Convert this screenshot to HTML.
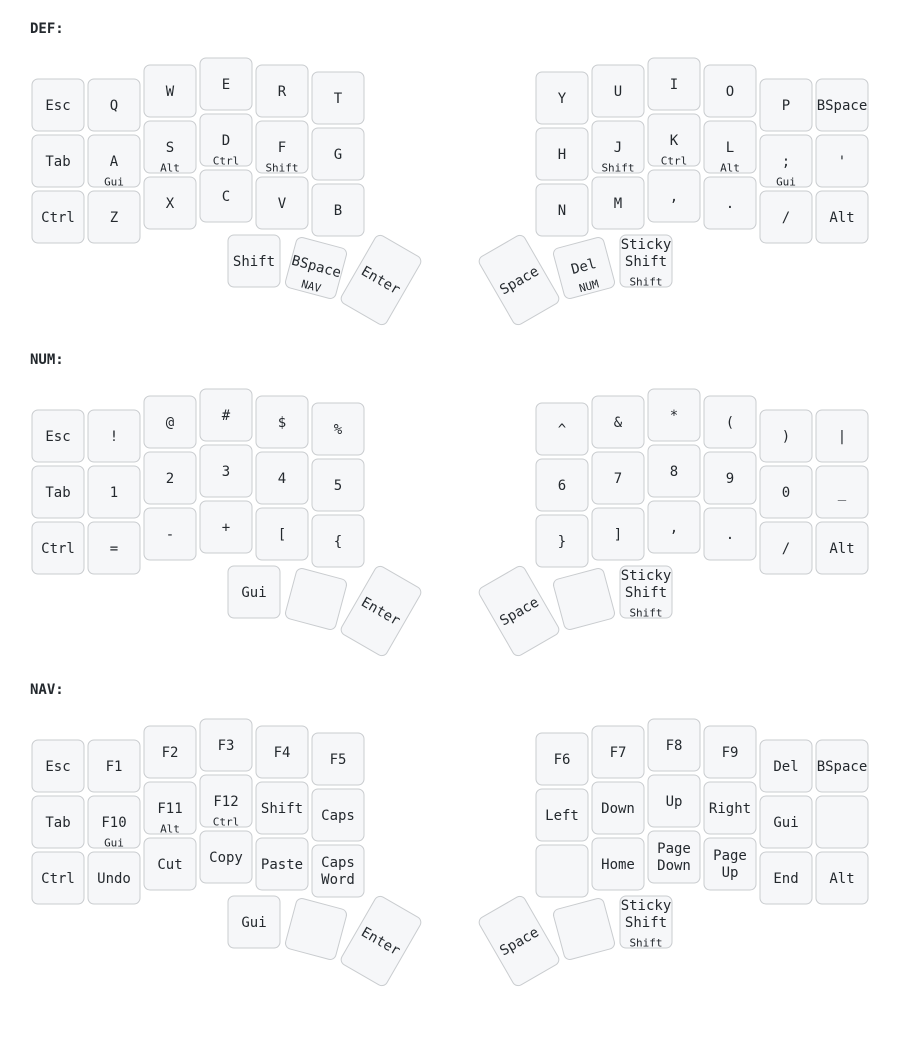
<!DOCTYPE html>
<html><head><meta charset="utf-8"><style>
html,body{margin:0;padding:0;background:#fff;width:900px;height:1048px;overflow:hidden}
svg{display:block}
rect.k{fill:#f6f7f9;stroke:#c9cccf;stroke-width:1}
text{font-family:"DejaVu Sans Mono","Liberation Mono",monospace;font-size:14px;fill:#24292e;text-anchor:middle;dominant-baseline:central;transform:translateY(1px)}
text.h{font-size:11px}
text.lbl{font-weight:bold;text-anchor:start;font-size:14px}
</style></head><body>
<svg width="900" height="1048" viewBox="0 0 900 1048" xmlns="http://www.w3.org/2000/svg">

<!-- ============ DEF ============ -->
<g>
<text class="lbl" x="30" y="28">DEF:</text>
<rect class="k" x="32" y="79" width="52" height="52" rx="6"/><text x="58" y="105">Esc</text>
<rect class="k" x="88" y="79" width="52" height="52" rx="6"/><text x="114" y="105">Q</text>
<rect class="k" x="144" y="65" width="52" height="52" rx="6"/><text x="170" y="91">W</text>
<rect class="k" x="200" y="58" width="52" height="52" rx="6"/><text x="226" y="84">E</text>
<rect class="k" x="256" y="65" width="52" height="52" rx="6"/><text x="282" y="91">R</text>
<rect class="k" x="312" y="72" width="52" height="52" rx="6"/><text x="338" y="98">T</text>
<rect class="k" x="32" y="135" width="52" height="52" rx="6"/><text x="58" y="161">Tab</text>
<rect class="k" x="88" y="135" width="52" height="52" rx="6"/><text x="114" y="161">A</text><text class="h" x="114" y="181">Gui</text>
<rect class="k" x="144" y="121" width="52" height="52" rx="6"/><text x="170" y="147">S</text><text class="h" x="170" y="167">Alt</text>
<rect class="k" x="200" y="114" width="52" height="52" rx="6"/><text x="226" y="140">D</text><text class="h" x="226" y="160">Ctrl</text>
<rect class="k" x="256" y="121" width="52" height="52" rx="6"/><text x="282" y="147">F</text><text class="h" x="282" y="167">Shift</text>
<rect class="k" x="312" y="128" width="52" height="52" rx="6"/><text x="338" y="154">G</text>
<rect class="k" x="32" y="191" width="52" height="52" rx="6"/><text x="58" y="217">Ctrl</text>
<rect class="k" x="88" y="191" width="52" height="52" rx="6"/><text x="114" y="217">Z</text>
<rect class="k" x="144" y="177" width="52" height="52" rx="6"/><text x="170" y="203">X</text>
<rect class="k" x="200" y="170" width="52" height="52" rx="6"/><text x="226" y="196">C</text>
<rect class="k" x="256" y="177" width="52" height="52" rx="6"/><text x="282" y="203">V</text>
<rect class="k" x="312" y="184" width="52" height="52" rx="6"/><text x="338" y="210">B</text>
<rect class="k" x="536" y="72" width="52" height="52" rx="6"/><text x="562" y="98">Y</text>
<rect class="k" x="592" y="65" width="52" height="52" rx="6"/><text x="618" y="91">U</text>
<rect class="k" x="648" y="58" width="52" height="52" rx="6"/><text x="674" y="84">I</text>
<rect class="k" x="704" y="65" width="52" height="52" rx="6"/><text x="730" y="91">O</text>
<rect class="k" x="760" y="79" width="52" height="52" rx="6"/><text x="786" y="105">P</text>
<rect class="k" x="816" y="79" width="52" height="52" rx="6"/><text x="842" y="105">BSpace</text>
<rect class="k" x="536" y="128" width="52" height="52" rx="6"/><text x="562" y="154">H</text>
<rect class="k" x="592" y="121" width="52" height="52" rx="6"/><text x="618" y="147">J</text><text class="h" x="618" y="167">Shift</text>
<rect class="k" x="648" y="114" width="52" height="52" rx="6"/><text x="674" y="140">K</text><text class="h" x="674" y="160">Ctrl</text>
<rect class="k" x="704" y="121" width="52" height="52" rx="6"/><text x="730" y="147">L</text><text class="h" x="730" y="167">Alt</text>
<rect class="k" x="760" y="135" width="52" height="52" rx="6"/><text x="786" y="161">;</text><text class="h" x="786" y="181">Gui</text>
<rect class="k" x="816" y="135" width="52" height="52" rx="6"/><text x="842" y="161">'</text>
<rect class="k" x="536" y="184" width="52" height="52" rx="6"/><text x="562" y="210">N</text>
<rect class="k" x="592" y="177" width="52" height="52" rx="6"/><text x="618" y="203">M</text>
<rect class="k" x="648" y="170" width="52" height="52" rx="6"/><text x="674" y="196">,</text>
<rect class="k" x="704" y="177" width="52" height="52" rx="6"/><text x="730" y="203">.</text>
<rect class="k" x="760" y="191" width="52" height="52" rx="6"/><text x="786" y="217">/</text>
<rect class="k" x="816" y="191" width="52" height="52" rx="6"/><text x="842" y="217">Alt</text>
<rect class="k" x="228" y="235" width="52" height="52" rx="6"/><text x="254" y="261">Shift</text>
<g transform="translate(316,268) rotate(15)"><rect class="k" x="-26" y="-26" width="52" height="52" rx="6"/><text x="0" y="-2">BSpace</text><text class="h" x="0" y="18">NAV</text></g>
<g transform="translate(381,280) rotate(30)"><rect class="k" x="-26" y="-39" width="52" height="78" rx="6"/><text x="0" y="0">Enter</text></g>
<g transform="translate(519,280) rotate(-30)"><rect class="k" x="-26" y="-39" width="52" height="78" rx="6"/><text x="0" y="0">Space</text></g>
<g transform="translate(584,268) rotate(-15)"><rect class="k" x="-26" y="-26" width="52" height="52" rx="6"/><text x="0" y="-2">Del</text><text class="h" x="0" y="18">NUM</text></g>
<rect class="k" x="620" y="235" width="52" height="52" rx="6"/><text x="646" y="244">Sticky</text><text x="646" y="261">Shift</text><text class="h" x="646" y="281">Shift</text>
</g>

<!-- ============ NUM ============ -->
<g transform="translate(0,331)">
<text class="lbl" x="30" y="28">NUM:</text>
<rect class="k" x="32" y="79" width="52" height="52" rx="6"/><text x="58" y="105">Esc</text>
<rect class="k" x="88" y="79" width="52" height="52" rx="6"/><text x="114" y="105">!</text>
<rect class="k" x="144" y="65" width="52" height="52" rx="6"/><text x="170" y="91">@</text>
<rect class="k" x="200" y="58" width="52" height="52" rx="6"/><text x="226" y="84">#</text>
<rect class="k" x="256" y="65" width="52" height="52" rx="6"/><text x="282" y="91">$</text>
<rect class="k" x="312" y="72" width="52" height="52" rx="6"/><text x="338" y="98">%</text>
<rect class="k" x="32" y="135" width="52" height="52" rx="6"/><text x="58" y="161">Tab</text>
<rect class="k" x="88" y="135" width="52" height="52" rx="6"/><text x="114" y="161">1</text>
<rect class="k" x="144" y="121" width="52" height="52" rx="6"/><text x="170" y="147">2</text>
<rect class="k" x="200" y="114" width="52" height="52" rx="6"/><text x="226" y="140">3</text>
<rect class="k" x="256" y="121" width="52" height="52" rx="6"/><text x="282" y="147">4</text>
<rect class="k" x="312" y="128" width="52" height="52" rx="6"/><text x="338" y="154">5</text>
<rect class="k" x="32" y="191" width="52" height="52" rx="6"/><text x="58" y="217">Ctrl</text>
<rect class="k" x="88" y="191" width="52" height="52" rx="6"/><text x="114" y="217">=</text>
<rect class="k" x="144" y="177" width="52" height="52" rx="6"/><text x="170" y="203">-</text>
<rect class="k" x="200" y="170" width="52" height="52" rx="6"/><text x="226" y="196">+</text>
<rect class="k" x="256" y="177" width="52" height="52" rx="6"/><text x="282" y="203">[</text>
<rect class="k" x="312" y="184" width="52" height="52" rx="6"/><text x="338" y="210">{</text>
<rect class="k" x="536" y="72" width="52" height="52" rx="6"/><text x="562" y="98">^</text>
<rect class="k" x="592" y="65" width="52" height="52" rx="6"/><text x="618" y="91">&amp;</text>
<rect class="k" x="648" y="58" width="52" height="52" rx="6"/><text x="674" y="84">*</text>
<rect class="k" x="704" y="65" width="52" height="52" rx="6"/><text x="730" y="91">(</text>
<rect class="k" x="760" y="79" width="52" height="52" rx="6"/><text x="786" y="105">)</text>
<rect class="k" x="816" y="79" width="52" height="52" rx="6"/><text x="842" y="105">|</text>
<rect class="k" x="536" y="128" width="52" height="52" rx="6"/><text x="562" y="154">6</text>
<rect class="k" x="592" y="121" width="52" height="52" rx="6"/><text x="618" y="147">7</text>
<rect class="k" x="648" y="114" width="52" height="52" rx="6"/><text x="674" y="140">8</text>
<rect class="k" x="704" y="121" width="52" height="52" rx="6"/><text x="730" y="147">9</text>
<rect class="k" x="760" y="135" width="52" height="52" rx="6"/><text x="786" y="161">0</text>
<rect class="k" x="816" y="135" width="52" height="52" rx="6"/><text x="842" y="161">_</text>
<rect class="k" x="536" y="184" width="52" height="52" rx="6"/><text x="562" y="210">}</text>
<rect class="k" x="592" y="177" width="52" height="52" rx="6"/><text x="618" y="203">]</text>
<rect class="k" x="648" y="170" width="52" height="52" rx="6"/><text x="674" y="196">,</text>
<rect class="k" x="704" y="177" width="52" height="52" rx="6"/><text x="730" y="203">.</text>
<rect class="k" x="760" y="191" width="52" height="52" rx="6"/><text x="786" y="217">/</text>
<rect class="k" x="816" y="191" width="52" height="52" rx="6"/><text x="842" y="217">Alt</text>
<rect class="k" x="228" y="235" width="52" height="52" rx="6"/><text x="254" y="261">Gui</text>
<g transform="translate(316,268) rotate(15)"><rect class="k" x="-26" y="-26" width="52" height="52" rx="6"/></g>
<g transform="translate(381,280) rotate(30)"><rect class="k" x="-26" y="-39" width="52" height="78" rx="6"/><text x="0" y="0">Enter</text></g>
<g transform="translate(519,280) rotate(-30)"><rect class="k" x="-26" y="-39" width="52" height="78" rx="6"/><text x="0" y="0">Space</text></g>
<g transform="translate(584,268) rotate(-15)"><rect class="k" x="-26" y="-26" width="52" height="52" rx="6"/></g>
<rect class="k" x="620" y="235" width="52" height="52" rx="6"/><text x="646" y="244">Sticky</text><text x="646" y="261">Shift</text><text class="h" x="646" y="281">Shift</text>
</g>

<!-- ============ NAV ============ -->
<g transform="translate(0,661)">
<text class="lbl" x="30" y="28">NAV:</text>
<rect class="k" x="32" y="79" width="52" height="52" rx="6"/><text x="58" y="105">Esc</text>
<rect class="k" x="88" y="79" width="52" height="52" rx="6"/><text x="114" y="105">F1</text>
<rect class="k" x="144" y="65" width="52" height="52" rx="6"/><text x="170" y="91">F2</text>
<rect class="k" x="200" y="58" width="52" height="52" rx="6"/><text x="226" y="84">F3</text>
<rect class="k" x="256" y="65" width="52" height="52" rx="6"/><text x="282" y="91">F4</text>
<rect class="k" x="312" y="72" width="52" height="52" rx="6"/><text x="338" y="98">F5</text>
<rect class="k" x="32" y="135" width="52" height="52" rx="6"/><text x="58" y="161">Tab</text>
<rect class="k" x="88" y="135" width="52" height="52" rx="6"/><text x="114" y="161">F10</text><text class="h" x="114" y="181">Gui</text>
<rect class="k" x="144" y="121" width="52" height="52" rx="6"/><text x="170" y="147">F11</text><text class="h" x="170" y="167">Alt</text>
<rect class="k" x="200" y="114" width="52" height="52" rx="6"/><text x="226" y="140">F12</text><text class="h" x="226" y="160">Ctrl</text>
<rect class="k" x="256" y="121" width="52" height="52" rx="6"/><text x="282" y="147">Shift</text>
<rect class="k" x="312" y="128" width="52" height="52" rx="6"/><text x="338" y="154">Caps</text>
<rect class="k" x="32" y="191" width="52" height="52" rx="6"/><text x="58" y="217">Ctrl</text>
<rect class="k" x="88" y="191" width="52" height="52" rx="6"/><text x="114" y="217">Undo</text>
<rect class="k" x="144" y="177" width="52" height="52" rx="6"/><text x="170" y="203">Cut</text>
<rect class="k" x="200" y="170" width="52" height="52" rx="6"/><text x="226" y="196">Copy</text>
<rect class="k" x="256" y="177" width="52" height="52" rx="6"/><text x="282" y="203">Paste</text>
<rect class="k" x="312" y="184" width="52" height="52" rx="6"/><text x="338" y="201">Caps</text><text x="338" y="218">Word</text>
<rect class="k" x="536" y="72" width="52" height="52" rx="6"/><text x="562" y="98">F6</text>
<rect class="k" x="592" y="65" width="52" height="52" rx="6"/><text x="618" y="91">F7</text>
<rect class="k" x="648" y="58" width="52" height="52" rx="6"/><text x="674" y="84">F8</text>
<rect class="k" x="704" y="65" width="52" height="52" rx="6"/><text x="730" y="91">F9</text>
<rect class="k" x="760" y="79" width="52" height="52" rx="6"/><text x="786" y="105">Del</text>
<rect class="k" x="816" y="79" width="52" height="52" rx="6"/><text x="842" y="105">BSpace</text>
<rect class="k" x="536" y="128" width="52" height="52" rx="6"/><text x="562" y="154">Left</text>
<rect class="k" x="592" y="121" width="52" height="52" rx="6"/><text x="618" y="147">Down</text>
<rect class="k" x="648" y="114" width="52" height="52" rx="6"/><text x="674" y="140">Up</text>
<rect class="k" x="704" y="121" width="52" height="52" rx="6"/><text x="730" y="147">Right</text>
<rect class="k" x="760" y="135" width="52" height="52" rx="6"/><text x="786" y="161">Gui</text>
<rect class="k" x="816" y="135" width="52" height="52" rx="6"/>
<rect class="k" x="536" y="184" width="52" height="52" rx="6"/>
<rect class="k" x="592" y="177" width="52" height="52" rx="6"/><text x="618" y="203">Home</text>
<rect class="k" x="648" y="170" width="52" height="52" rx="6"/><text x="674" y="187">Page</text><text x="674" y="204">Down</text>
<rect class="k" x="704" y="177" width="52" height="52" rx="6"/><text x="730" y="194">Page</text><text x="730" y="211">Up</text>
<rect class="k" x="760" y="191" width="52" height="52" rx="6"/><text x="786" y="217">End</text>
<rect class="k" x="816" y="191" width="52" height="52" rx="6"/><text x="842" y="217">Alt</text>
<rect class="k" x="228" y="235" width="52" height="52" rx="6"/><text x="254" y="261">Gui</text>
<g transform="translate(316,268) rotate(15)"><rect class="k" x="-26" y="-26" width="52" height="52" rx="6"/></g>
<g transform="translate(381,280) rotate(30)"><rect class="k" x="-26" y="-39" width="52" height="78" rx="6"/><text x="0" y="0">Enter</text></g>
<g transform="translate(519,280) rotate(-30)"><rect class="k" x="-26" y="-39" width="52" height="78" rx="6"/><text x="0" y="0">Space</text></g>
<g transform="translate(584,268) rotate(-15)"><rect class="k" x="-26" y="-26" width="52" height="52" rx="6"/></g>
<rect class="k" x="620" y="235" width="52" height="52" rx="6"/><text x="646" y="244">Sticky</text><text x="646" y="261">Shift</text><text class="h" x="646" y="281">Shift</text>
</g>
</svg>
</body></html>
